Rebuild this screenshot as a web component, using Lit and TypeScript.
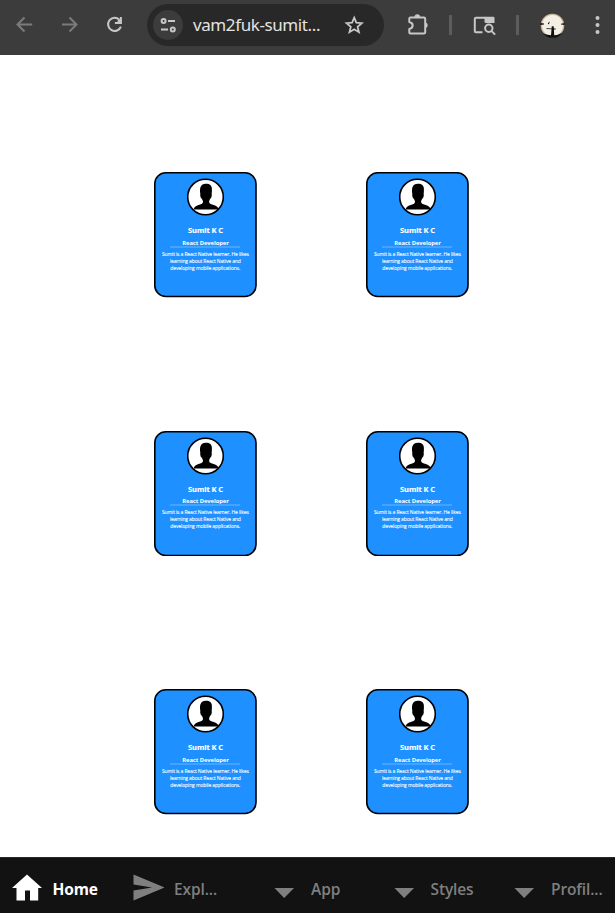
import { LitElement, html, css } from "lit";
import { customElement, property } from "lit/decorators.js";

@customElement("browser-bar")
class BrowserBar extends LitElement {
  static styles = css`
    :host { display: flex; align-items: center; height: 55px; box-sizing: border-box; padding-bottom: 5px;
      background: #3c3c3c; color: #c7c7c7; font-family: "Noto Sans", "Open Sans", sans-serif; flex: none; }
    svg { display: block; flex: none; fill: none; stroke: currentColor; stroke-width: 2; }
    .nav { width: 20px; height: 20px; margin-left: 15px; color: #7b7b7b; }
    .nav.next { margin-left: 24px; }
    .nav.reload { margin-left: 26px; color: #c7c7c7; }
    .address { display: flex; align-items: center; width: 237px; height: 42px; margin-left: 22px;
      border-radius: 21px; background: #282828; box-sizing: border-box; padding-left: 6px; flex: none; }
    .site { display: grid; place-items: center; width: 30px; height: 30px; border-radius: 50%; background: #3c3c3c; }
    .url { width: 151px; margin-left: 10px; font-size: 17px; line-height: 24px; color: #e3e3e3; white-space: nowrap; letter-spacing: -0.4px; }
    .puzzle { margin-left: 23px; }
    .rule { width: 3px; height: 20px; background: #5d5d5d; flex: none; }
    .r1 { margin-left: 19px; }
    .search { margin-left: 21px; }
    .r2 { margin-left: 20px; }
    .avatar { margin-left: 21px; }
    .dots { margin-left: 29px; }
  `;
  render() {
    return html`
      <svg class="nav" viewBox="0 0 20 20"><path d="M17.2 9.5H3.5M9.5 2.5l-7 7 7 7"/></svg>
      <svg class="nav next" viewBox="0 0 20 20"><path d="M3 9.5h13.7M10.5 2.5l7 7-7 7"/></svg>
      <svg class="nav reload" viewBox="0 0 20 20"><path d="M14.3 4.6A6.6 6.6 0 1 0 15.9 11.6M15.9 2v6h-6"/><path d="M13 5l3-1.5V8h-4z" fill="currentColor" stroke="none"/></svg>
      <div class="address">
        <div class="site"><svg width="18" height="18" viewBox="0 0 18 18"><circle cx="4.6" cy="5" r="2"/><path d="M9 5h7M2 13.4h7"/><circle cx="13.8" cy="13.4" r="2"/></svg></div>
        <div class="url">vam2fuk-sumit...</div>
        <svg width="20" height="20" viewBox="0 0 20 20"><path stroke-width="1.8" d="M10.2 2.7l2.1 5 5.5.5-4.2 3.6 1.3 5.4-4.7-2.9-4.7 2.9 1.3-5.4L2.6 8.2l5.5-.5z"/></svg>
      </div>
      <svg class="puzzle" width="23" height="24" viewBox="0 0 23 24"><path stroke-linejoin="round" d="M3.8 4.6H17a1.2 1.2 0 0 1 1.2 1.2V19.2a1.2 1.2 0 0 1-1.2 1.2H3.3a1 1 0 0 1-1-1V16c4.5-1 4.5-6 0-7V5.6a1 1 0 0 1 1-1z"/><path fill="currentColor" stroke="none" d="M7.5 4a2.8 2.8 0 0 1 5.6 0zM18.8 9.5a3 3 0 0 1 0 5.6z"/></svg>
      <div class="rule r1"></div>
      <svg class="search" width="23" height="22" viewBox="0 0 23 22"><path d="M9.5 18.2H3a1.2 1.2 0 0 1-1.2-1.2V5a1.2 1.2 0 0 1 1.2-1.2h9"/><path stroke="none" fill="currentColor" d="M11.5 2.8h8.7A1.3 1.3 0 0 1 21.5 4.1V9h-8.5a1.5 1.5 0 0 1-1.5-1.5z"/><circle cx="15.8" cy="14.3" r="3.7"/><path d="M18.4 16.9l3.7 3.7"/></svg>
      <div class="rule r2"></div>
      <svg class="avatar" width="25" height="25" viewBox="0 0 25 25">
        <defs><radialGradient id="g"><stop offset=".8" stop-color="#f3efe4"/><stop offset=".92" stop-color="#b5a18a"/><stop offset="1" stop-color="#3a2418"/></radialGradient><clipPath id="c"><circle cx="12.5" cy="12.5" r="12.3"/></clipPath></defs>
        <g clip-path="url(#c)" stroke="none"><rect width="25" height="25" fill="url(#g)"/><path fill="#120e0c" d="M0 18c3 2.5 6 3.8 11 4.2l.5-6-5-.2v-.8l5 .2.3-2.200h1.800l.3 2.200 1.800.2v.8l-1.800.1.3 5.800c4-.4 7-2 11-4v8H0zM8 10l1.800-1.400-.8 2.400-1 .3zM0 10l4 .6v.8L0 12zM25 10l-4 .7v.8l4 .5z"/></g>
      </svg>
      <svg class="dots" width="8" height="20" viewBox="0 0 8 20"><g fill="currentColor" stroke="none"><circle cx="3.5" cy="3" r="2"/><circle cx="3.5" cy="10" r="2"/><circle cx="3.5" cy="17" r="2"/></g></svg>
    `;
  }
}

@customElement("profile-card")
class ProfileCard extends LitElement {
  static styles = css`
    :host { position: relative; display: flex; flex-direction: column; align-items: center; box-sizing: border-box; width: 103px; height: 125.5px;
      color: #fff; text-align: center; white-space: nowrap; font-family: "Open Sans", "Noto Sans", sans-serif; padding: 6.1px 0 0; }
    svg { display: block; flex: none; }
    .frame { position: absolute; inset: 0; width: 103px; height: 125.5px; z-index: -1; }
    .portrait { width: 38px; height: 38px; }
    .name { margin-top: 9px; font-size: 7.5px; line-height: 10px; font-weight: 700; letter-spacing: -0.08px; -webkit-text-stroke: 0.15px #fff; }
    .role { margin-top: 4.9px; font-size: 5.8px; line-height: 7px; font-weight: 700; letter-spacing: -0.05px; }
    .line { width: 70px; height: 2px; margin: -1px 1px 0 0; background: #45a3ff; }
    .bio { margin: 3px 0.4px 0 0; font-size: 5px; line-height: 7px; letter-spacing: -0.12px; -webkit-text-stroke: 0.1px #fff; }
  `;
  render() {
    return html`
      <svg class="frame" viewBox="0 0 103 125.5"><rect x=".8" y=".8" width="101.2" height="123.7" rx="11" fill="#1e90ff" stroke="#000" stroke-width="1.6"/></svg>
      <svg class="portrait" viewBox="0 0 38 38"><circle cx="18.5" cy="19" r="17.8" fill="#fff" stroke="#000" stroke-width="1.6"/>
        <path d="M6.6 31.5c.4-3 2.600-3.800 5.800-4.800 2.300-.7 3.300-1.300 3.600-2.800-.1-1.300-.6-2-1.200-3.100-.8-.5-1.300-1.300-1.500-3-.3-.8-.2-1.200.1-1.500-.5-2.300-.6-4.300-.1-6.500.8-2.800 2.500-4 5.600-4 4 0 6 1.700 6 5.700 0 1.600 0 3.200-.3 4.800.4.300.4.800.1 1.500-.2 1.700-.7 2.500-1.500 3-.5 1.200-1 1.800-1.100 3.100.3 1.500 1.500 2.100 3.800 2.800 3.200 1 5.400 1.800 5.800 4.800z"/></svg>
      <div class="name">Sumit K C</div>
      <div class="role">React Developer</div>
      <div class="line"></div>
      <div class="bio">Sumit is a React Native learner. He likes<br>learning about React Native and<br>developing mobile applications.</div>
    `;
  }
}

@customElement("tab-item")
class TabItem extends LitElement {
  @property() icon = "arrow";
  @property() label = "";
  static styles = css`
    :host { display: flex; align-items: center; height: 100%; color: #7f7f7f; box-sizing: border-box;
      font: 600 15.5px/22px "Open Sans", "Noto Sans", sans-serif; letter-spacing: -0.12px; white-space: nowrap; }
    :host([active]) { color: #fff; font-weight: 700; }
    svg { display: block; width: 32px; height: 30px; fill: currentColor; flex: none; }
    .label { padding-top: 3px; margin-left: 8.5px; }
    .send + .label { margin-left: 10px; }
    .arrow + .label { margin-left: 11px; }
  `;
  render() {
    const paths: Record<string, string> = {
      home: "M15 2.5L30 16H26.2V28.5H18V18.5H13V28.5H4.5V16H0z",
      send: "M1.5 2.5L32.5 15.5 1.5 28.5V18.5L20 15.5 1.5 12.5z",
      arrow: "M6.5 16h19.500L16.2 26z",
    };
    return html`<svg class=${this.icon} viewBox="0 0 32 30"><path d=${paths[this.icon]}/></svg><span class="label">${this.label}</span>`;
  }
}

@customElement("app-root")
class AppRoot extends LitElement {
  static styles = css`
    :host { display: flex; flex-direction: column; width: 615px; height: 913px; background: #fff; overflow: hidden; }
    main { position: relative; z-index: 0; flex: 1; display: grid; grid-template-columns: 103px 103px; grid-auto-rows: 125.5px; column-gap: 109px; row-gap: 133px;
      padding: 117px 0 0 154px; }
    nav { flex: none; display: grid; grid-template-columns: 120px 136px 119.5px 120.5px 1fr; height: 56px; box-sizing: border-box;
      border-top: 1px solid #272729; background: #121212; padding: 4px 0 1px 12px; }
  `;
  render() {
    return html`
      <browser-bar></browser-bar>
      <main>${Array.from({ length: 6 }, () => html`<profile-card></profile-card>`)}</main>
      <nav>
        <tab-item active icon="home" label="Home"></tab-item>
        <tab-item icon="send" label="Expl..."></tab-item>
        <tab-item label="App"></tab-item>
        <tab-item label="Styles"></tab-item>
        <tab-item label="Profil..."></tab-item>
      </nav>`;
  }
}
